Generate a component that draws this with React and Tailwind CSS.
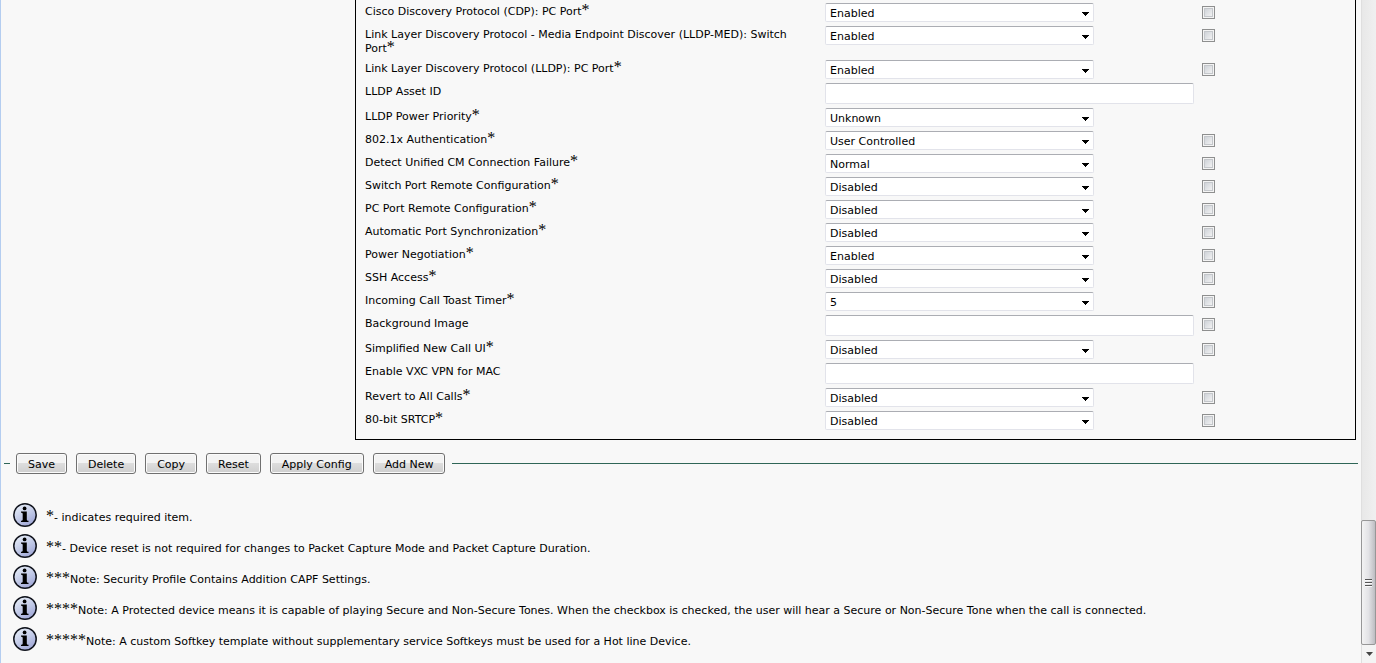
import React, { useState } from 'react';

const toggle = ['Enabled', 'Disabled'];

const settings = [
  { id: 'cdpPcPort', label: 'Cisco Discovery Protocol (CDP): PC Port', required: true, value: 'Enabled', options: toggle, override: true },
  { id: 'lldpMedSwitchPort', label: 'Link Layer Discovery Protocol - Media Endpoint Discover (LLDP-MED): Switch Port', required: true, value: 'Enabled', options: toggle, override: true },
  { id: 'lldpPcPort', label: 'Link Layer Discovery Protocol (LLDP): PC Port', required: true, value: 'Enabled', options: toggle, override: true },
  { id: 'lldpAssetId', label: 'LLDP Asset ID', value: '' },
  { id: 'lldpPower', label: 'LLDP Power Priority', required: true, value: 'Unknown', options: ['Unknown', 'Low', 'High', 'Critical'] },
  { id: 'dot1x', label: '802.1x Authentication', required: true, value: 'User Controlled', options: ['User Controlled', ...toggle], override: true },
  { id: 'cmFailure', label: 'Detect Unified CM Connection Failure', required: true, value: 'Normal', options: ['Normal', 'Delayed'], override: true },
  { id: 'switchPortRemote', label: 'Switch Port Remote Configuration', required: true, value: 'Disabled', options: toggle, override: true },
  { id: 'pcPortRemote', label: 'PC Port Remote Configuration', required: true, value: 'Disabled', options: toggle, override: true },
  { id: 'portSync', label: 'Automatic Port Synchronization', required: true, value: 'Disabled', options: toggle, override: true },
  { id: 'powerNegotiation', label: 'Power Negotiation', required: true, value: 'Enabled', options: toggle, override: true },
  { id: 'sshAccess', label: 'SSH Access', required: true, value: 'Disabled', options: toggle, override: true },
  { id: 'toastTimer', label: 'Incoming Call Toast Timer', required: true, value: '5', options: ['3', '4', '5', '10'], override: true },
  { id: 'backgroundImage', label: 'Background Image', value: '', override: true },
  { id: 'simplifiedUi', label: 'Simplified New Call UI', required: true, value: 'Disabled', options: toggle, override: true },
  { id: 'vxcVpn', label: 'Enable VXC VPN for MAC', value: '' },
  { id: 'revertCalls', label: 'Revert to All Calls', required: true, value: 'Disabled', options: toggle, override: true },
  { id: 'srtcp', label: '80-bit SRTCP', required: true, value: 'Disabled', options: toggle, override: true },
];

const actions = ['Save', 'Delete', 'Copy', 'Reset', 'Apply Config', 'Add New'];

const notes = [
  { stars: '*', text: '- indicates required item.' },
  { stars: '**', text: '- Device reset is not required for changes to Packet Capture Mode and Packet Capture Duration.' },
  { stars: '***', text: 'Note: Security Profile Contains Addition CAPF Settings.' },
  { stars: '****', text: 'Note: A Protected device means it is capable of playing Secure and Non-Secure Tones. When the checkbox is checked, the user will hear a Secure or Non-Secure Tone when the call is connected.' },
  { stars: '*****', text: 'Note: A custom Softkey template without supplementary service Softkeys must be used for a Hot line Device.' },
];

// zero line height keeps the larger star from stretching the line it sits on
const Stars = ({ children }) => (
  <span className="font-['Liberation_Serif',serif] text-base leading-[0]">{children}</span>
);

const fieldClass =
  'block rounded-[2px] border border-[#e2e3ea] border-t-[#abadb3] bg-white px-1 text-[11px] text-black outline-none';

const SettingRow = ({ setting }) => {
  const { id, label, required, options, override } = setting;
  const [value, setValue] = useState(setting.value);
  const [checked, setChecked] = useState(false);
  const onChange = (e) => setValue(e.target.value);

  return (
    <div className="flex items-start">
      <label htmlFor={id} className="w-[460px] shrink-0 pt-[3px] pr-3 pb-[3px] leading-[14px]">
        {label}
        {required && <Stars>*</Stars>}
      </label>
      <div className="w-[377px] shrink-0 pt-px pb-[3px]">
        {options ? (
          <div className="relative w-[269px]">
            <select id={id} value={value} onChange={onChange} className={`${fieldClass} h-[19px] w-full appearance-none pt-0.5`}>
              {options.map((option) => (
                <option key={option}>{option}</option>
              ))}
            </select>
            <svg className="pointer-events-none absolute top-[9px] right-[5px] h-1 w-[7px]" viewBox="0 0 7 4" shapeRendering="crispEdges">
              <path d="M0 0h7v1H0zM1 1h5v1H1zM2 2h3v1H2zM3 3h1v1H3z" />
            </svg>
          </div>
        ) : (
          <input id={id} type="text" value={value} onChange={onChange} className={`${fieldClass} h-[21px] w-[369px]`} />
        )}
      </div>
      {override && (
        <input
          type="checkbox"
          aria-label={`Override ${label}`}
          checked={checked}
          onChange={(e) => setChecked(e.target.checked)}
          className="mt-1 size-[13px] shrink-0 appearance-none border border-[#8e8f8f] bg-linear-to-br from-[#cbcfd5] to-[#f6f6f6] bg-origin-content p-px shadow-[inset_0_0_0_1px_#f4f4f4,inset_0_0_0_2px_#c4c7cb] checked:from-[#4b6a9b]"
        />
      )}
    </div>
  );
};

const InfoIcon = () => (
  <svg className="size-6 shrink-0" viewBox="0 0 24 24">
    <defs>
      <linearGradient id="infoFill" x1="0.2" y1="0" x2="0.8" y2="1">
        <stop offset="0" stopColor="#e8eff8" />
        <stop offset="0.5" stopColor="#c3cbe8" />
        <stop offset="1" stopColor="#9ba2d4" />
      </linearGradient>
    </defs>
    <circle cx="12" cy="12" r="11.2" fill="url(#infoFill)" stroke="#10131c" strokeWidth="1.5" />
    <circle cx="11.6" cy="5.4" r="1.9" />
    <path d="M8 8.600h5.800v8c0 .9.500 1.200 1.700 1.200v1.200H8v-1.200c1.200 0 1.700-.3 1.700-1.200v-5.600c0-.9-.5-1.200-1.700-1.200z" />
  </svg>
);

const ScrollRail = () => (
  <div className="flex w-[15px] shrink-0 flex-col justify-end border-l border-[#dfdfdf] bg-linear-to-r from-[#e8e8e8] to-[#f0f0f0]" aria-hidden="true">
    <div className="-ml-px flex h-[125px] items-center justify-center rounded-[2px] border border-[#979797] bg-linear-to-r from-[#f3f3f3] via-[#e3e3e6] to-[#bdbdc2]">
      <svg className="h-2 w-[7px]" viewBox="0 0 7 8" shapeRendering="crispEdges">
        <path d="M0 0h7v1H0zM0 3h7v1H0zM0 6h7v1H0z" fill="#555" />
        <path d="M0 1h7v1H0zM0 4h7v1H0zM0 7h7v1H0z" fill="#fafafa" />
      </svg>
    </div>
    <div className="flex h-[18px] items-center justify-center bg-[#f4f4f4]">
      <svg className="h-1 w-[7px]" viewBox="0 0 7 4">
        <path d="M0 0h7L3.500 4z" fill="#444" />
      </svg>
    </div>
  </div>
);

const App = () => (
  <div className="flex min-h-screen border-l border-[#b4cdf0] bg-[#f8f8f8] font-['DejaVu_Sans',sans-serif] text-[11px] text-black">
    <main className="min-w-0 flex-1">
      <section className="mr-[5px] ml-[354px] border border-t-0 border-black pt-0.5 pb-1.5 pl-[9px]">
        {settings.map((setting) => (
          <SettingRow key={setting.id} setting={setting} />
        ))}
      </section>

      <div className="mt-[13px] mr-[3px] ml-[3px] flex items-center">
        <span className="mr-1.5 h-px w-1.5 bg-[#2f6657]" />
        <div className="flex gap-[9px]">
          {actions.map((action) => (
            <button
              key={action}
              type="button"
              className="h-[21px] rounded-[3px] border border-[#707070] bg-linear-to-b from-[#f3f3f3] from-50% via-[#dddddd] via-50% to-[#cfcfcf] px-[11px] pt-0.5 leading-[14px] whitespace-nowrap shadow-[inset_0_0_0_1px_#fbfbfb]"
            >
              {action}
            </button>
          ))}
        </div>
        <span className="ml-[7px] h-px flex-1 bg-[#2f6657]" />
      </div>

      <ul className="mt-[29px] ml-3 flex flex-col gap-[7px]">
        {notes.map(({ stars, text }) => (
          <li key={stars} className="flex items-center gap-[9px]">
            <InfoIcon />
            <p className="pt-1.5 leading-4">
              <Stars>{stars}</Stars>
              {text}
            </p>
          </li>
        ))}
      </ul>
    </main>
    <ScrollRail />
  </div>
);

export default App;
